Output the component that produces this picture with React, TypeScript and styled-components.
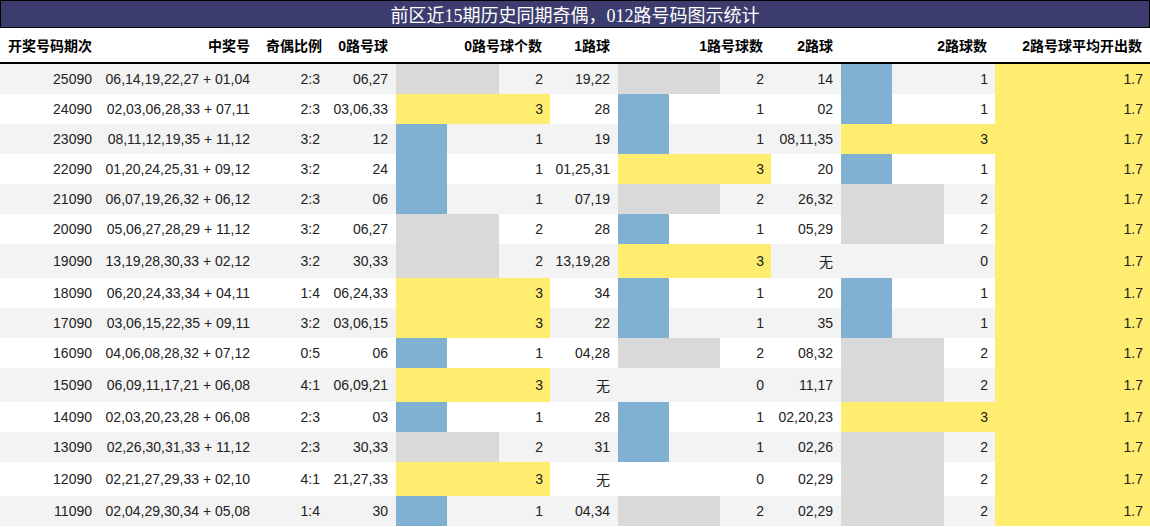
import React from "react";
import styled, { createGlobalStyle } from "styled-components";

const Global = createGlobalStyle`
  html, body { margin: 0; padding: 0; background: #ffffff; }
  body { font-family: "Liberation Sans", "Noto Sans CJK SC", sans-serif; }
  *, *::before, *::after { box-sizing: border-box; }
`;

const Wrap = styled.div`
  width: 1150px;
`;

const Title = styled.div`
  background: #3c3c6e;
  border: 1px solid #000000;
  color: #ffffff;
  font-family: "Liberation Serif", "Noto Sans CJK SC", serif;
  font-size: 18px;
  text-align: center;
  line-height: normal;
`;

const Table = styled.table`
  width: 1150px;
  table-layout: fixed;
  border-collapse: collapse;
  font-size: 14px;
  color: #222222;
`;

const Col = styled.col<{ $w: number }>`
  width: ${(p) => p.$w}px;
`;

const Th = styled.th<{ $left?: boolean }>`
  padding: 7px 8px 7px 8px;
  text-align: ${(p) => (p.$left ? "left" : "right")};
  font-weight: bold;
  color: #000000;
  border-bottom: 2px solid #000000;
  white-space: nowrap;
`;

const Row = styled.tr<{ $alt: boolean }>`
  background: ${(p) => (p.$alt ? "#f3f3f3" : "#ffffff")};
`;

const Td = styled.td`
  padding: 7px 8px 7px 0;
  text-align: right;
  white-space: nowrap;
`;

const BarTd = styled.td<{ $pct: number; $color: string }>`
  padding: 7px 7px 7px 0;
  text-align: right;
  white-space: nowrap;
  background-image: linear-gradient(
    to right,
    ${(p) => p.$color} 0,
    ${(p) => p.$color} ${(p) => p.$pct}%,
    transparent ${(p) => p.$pct}%
  );
`;

const colors: Record<number, string> = {
  0: "transparent",
  1: "#80b1d3",
  2: "#d9d9d9",
  3: "#ffed6f",
};

type R = [string, string, string, string, number, string, number, string, number, string];

const rows: R[] = [
  ["25090", "06,14,19,22,27 + 01,04", "2:3", "06,27", 2, "19,22", 2, "14", 1, "1.7"],
  ["24090", "02,03,06,28,33 + 07,11", "2:3", "03,06,33", 3, "28", 1, "02", 1, "1.7"],
  ["23090", "08,11,12,19,35 + 11,12", "3:2", "12", 1, "19", 1, "08,11,35", 3, "1.7"],
  ["22090", "01,20,24,25,31 + 09,12", "3:2", "24", 1, "01,25,31", 3, "20", 1, "1.7"],
  ["21090", "06,07,19,26,32 + 06,12", "2:3", "06", 1, "07,19", 2, "26,32", 2, "1.7"],
  ["20090", "05,06,27,28,29 + 11,12", "3:2", "06,27", 2, "28", 1, "05,29", 2, "1.7"],
  ["19090", "13,19,28,30,33 + 02,12", "3:2", "30,33", 2, "13,19,28", 3, "无", 0, "1.7"],
  ["18090", "06,20,24,33,34 + 04,11", "1:4", "06,24,33", 3, "34", 1, "20", 1, "1.7"],
  ["17090", "03,06,15,22,35 + 09,11", "3:2", "03,06,15", 3, "22", 1, "35", 1, "1.7"],
  ["16090", "04,06,08,28,32 + 07,12", "0:5", "06", 1, "04,28", 2, "08,32", 2, "1.7"],
  ["15090", "06,09,11,17,21 + 06,08", "4:1", "06,09,21", 3, "无", 0, "11,17", 2, "1.7"],
  ["14090", "02,03,20,23,28 + 06,08", "2:3", "03", 1, "28", 1, "02,20,23", 3, "1.7"],
  ["13090", "02,26,30,31,33 + 11,12", "2:3", "30,33", 2, "31", 1, "02,26", 2, "1.7"],
  ["12090", "02,21,27,29,33 + 02,10", "4:1", "21,27,33", 3, "无", 0, "02,29", 2, "1.7"],
  ["11090", "02,04,29,30,34 + 05,08", "1:4", "30", 1, "04,34", 2, "02,29", 2, "1.7"],
];

const widths = [100, 158, 70, 68, 154, 68, 153, 70, 154, 155];

const Count: React.FC<{ n: number }> = ({ n }) => (
  <BarTd $pct={(n / 3) * 100} $color={colors[n]}>
    {n}
  </BarTd>
);

export default function App() {
  return (
    <Wrap>
      <Global />
      <Title>前区近15期历史同期奇偶，012路号码图示统计</Title>
      <Table>
        <colgroup>
          {widths.map((w, i) => (
            <Col key={i} $w={w} />
          ))}
        </colgroup>
        <thead>
          <tr>
            <Th $left>开奖号码期次</Th>
            <Th>中奖号</Th>
            <Th>奇偶比例</Th>
            <Th>0路号球</Th>
            <Th>0路号球个数</Th>
            <Th>1路球</Th>
            <Th>1路号球数</Th>
            <Th>2路球</Th>
            <Th>2路球数</Th>
            <Th>2路号球平均开出数</Th>
          </tr>
        </thead>
        <tbody>
          {rows.map((r, i) => (
            <Row key={r[0]} $alt={i % 2 === 0}>
              <Td>{r[0]}</Td>
              <Td>{r[1]}</Td>
              <Td>{r[2]}</Td>
              <Td>{r[3]}</Td>
              <Count n={r[4]} />
              <Td>{r[5]}</Td>
              <Count n={r[6]} />
              <Td>{r[7]}</Td>
              <Count n={r[8]} />
              <BarTd $pct={100} $color="#ffed6f">{r[9]}</BarTd>
            </Row>
          ))}
        </tbody>
      </Table>
    </Wrap>
  );
}
